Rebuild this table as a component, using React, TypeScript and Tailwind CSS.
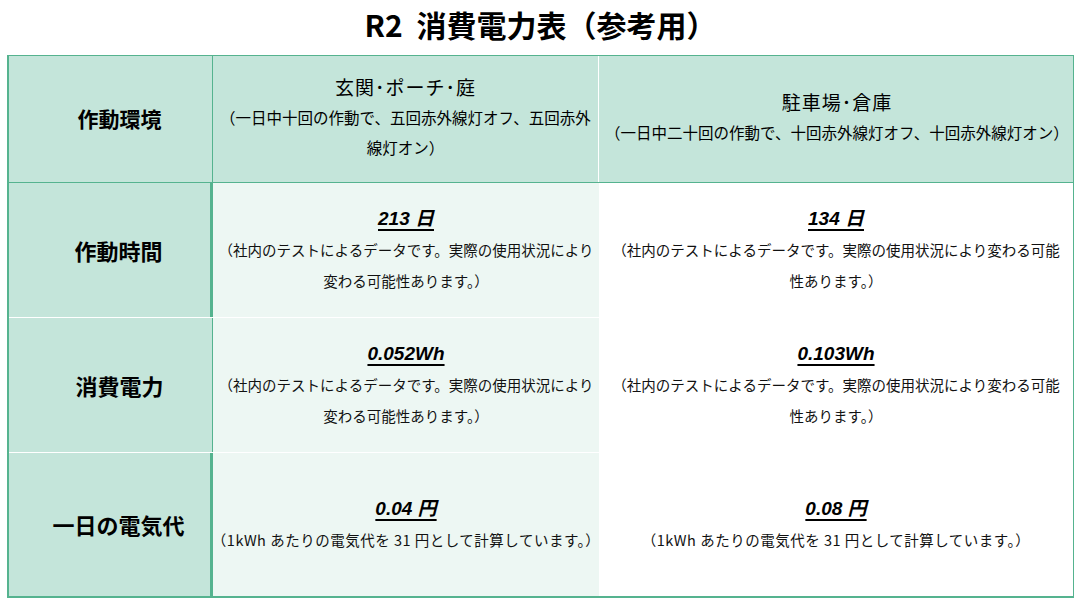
import React from 'react';

const jp = 'font-["Noto_Sans_CJK_JP","Noto_Sans",sans-serif]';

interface Cell {
  value: string;
  lines: string[];
}

interface RowProps {
  label: string;
  thick: boolean;
  last?: boolean;
  cells: Cell[];
  wide?: boolean;
}

const Value: React.FC<{ text: string }> = ({ text }) => (
  <div className='font-["Liberation_Sans","Noto_Sans_CJK_JP",sans-serif] text-[19px] leading-[30px] font-bold italic underline decoration-[1.5px] underline-offset-[4px] text-black'>
    {text}
  </div>
);

const Note: React.FC<{ lines: string[]; wide?: boolean }> = ({ lines, wide }) => (
  <>
    {lines.map((l) => (
      <p
        key={l}
        className={`text-[14.5px] leading-[31px] text-[#111] whitespace-nowrap ${wide ? 'tracking-[0.5px]' : ''}`}
      >
        {l}
      </p>
    ))}
  </>
);

const Row: React.FC<RowProps> = ({ label, thick, last, cells, wide }) => (
  <div className={`flex ${last ? 'h-[143px]' : 'h-[135px] border-b border-white'}`}>
    <div
      className={`w-[204px] shrink-0 bg-[#c4e5da] flex items-center justify-center pl-[18px] border-[#55b38f] ${
        thick ? 'border-r-[3px]' : 'border-r'
      }`}
    >
      <span className="text-[22px] font-bold text-black">{label}</span>
    </div>
    <div className="w-[386px] shrink-0 bg-[#edf7f3] flex flex-col items-center justify-center px-[4px] text-center">
      <Value text={cells[0].value} />
      <Note lines={cells[0].lines} wide={wide} />
    </div>
    <div className="flex-1 bg-white flex flex-col items-center justify-center px-2 text-center">
      <Value text={cells[1].value} />
      <Note lines={cells[1].lines} wide={wide} />
    </div>
  </div>
);

const noteA = ['（社内のテストによるデータです。実際の使用状況により', '変わる可能性あります。）'];
const noteB = ['（社内のテストによるデータです。実際の使用状況により変わる可能', '性あります。）'];
const yen = ['（1kWh あたりの電気代を 31 円として計算しています。）'];

export default function App() {
  return (
    <div className={`w-[1081px] h-[601px] bg-white text-black ${jp}`}>
      {/* Title */}
      <h1 className="h-[55px] flex items-center justify-center pb-[6px] text-[30px] font-bold whitespace-pre">
        R2  消費電力表（参考用）
      </h1>

      {/* Table */}
      <div className="ml-[7px] w-[1067px] border-l-2 border-t border-r border-b-2 border-[#55b38f]">
        {/* Header */}
        <div className="flex h-[127px] bg-[#c4e5da] border-b border-[#55b38f]">
          <div className="w-[204px] shrink-0 flex items-center justify-center pl-[18px] border-r border-[#55b38f]">
            <span className="text-[21px] font-bold">作動環境</span>
          </div>
          <div className="w-[386px] shrink-0 flex flex-col items-center justify-center px-[6px] pb-1 text-center border-r border-white">
            <div className="text-[19px] leading-[30px] tracking-[1px]">玄関･ポーチ･庭</div>
            <p className="text-[15.5px] leading-[30px] whitespace-nowrap">（一日中十回の作動で、五回赤外線灯オフ、五回赤外</p>
            <p className="text-[15.5px] leading-[30px] whitespace-nowrap">線灯オン）</p>
          </div>
          <div className="flex-1 flex flex-col items-center justify-center px-[6px] pb-1 text-center">
            <div className="text-[19px] leading-[30px] tracking-[1px]">駐車場･倉庫</div>
            <p className="text-[15.5px] leading-[30px] whitespace-nowrap">（一日中二十回の作動で、十回赤外線灯オフ、十回赤外線灯オン）</p>
          </div>
        </div>

        <Row
          label="作動時間"
          thick
          cells={[
            { value: '213 日', lines: noteA },
            { value: '134 日', lines: noteB },
          ]}
        />
        <Row
          label="消費電力"
          thick={false}
          cells={[
            { value: '0.052Wh', lines: noteA },
            { value: '0.103Wh', lines: noteB },
          ]}
        />
        <Row
          label="一日の電気代"
          thick
          last
          wide
          cells={[
            { value: '0.04 円', lines: yen },
            { value: '0.08 円', lines: yen },
          ]}
        />
      </div>
    </div>
  );
}
